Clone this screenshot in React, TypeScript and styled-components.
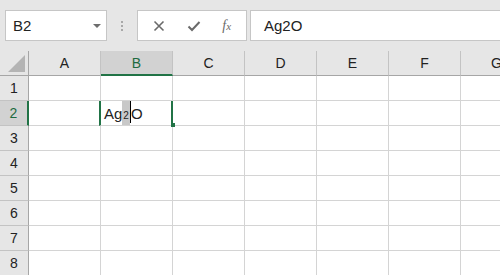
import React, { FC } from 'react';
import styled, { createGlobalStyle } from 'styled-components';

const GlobalStyle = createGlobalStyle`
  body {
    margin: 0;
    background: #ffffff;
    font-family: "Liberation Sans", "Noto Sans CJK JP", sans-serif;
    overflow: hidden;
  }
`;

const green = '#217346';

const Page = styled.div`
  width: 500px;
  height: 275px;
  overflow: hidden;
  background: #fff;
`;

const Toolbar = styled.div`
  display: flex;
  align-items: flex-start;
  height: 51px;
  box-sizing: border-box;
  padding: 10px 0 0 5px;
  background: #e6e6e6;
`;

const NameBox = styled.div`
  display: flex;
  align-items: center;
  justify-content: space-between;
  width: 102px;
  height: 31px;
  box-sizing: border-box;
  border: 1px solid #c6c6c6;
  background: #fff;
  padding: 0 5px 0 7px;
  font-size: 15px;
  color: #222;
`;

const Arrow = styled.span`
  width: 0;
  height: 0;
  border-left: 4px solid transparent;
  border-right: 4px solid transparent;
  border-top: 4px solid #6d6d6d;
`;

const Grip = styled.div`
  width: 30px;
  height: 31px;
  display: flex;
  flex-direction: column;
  align-items: center;
  justify-content: center;
  gap: 2px;
  span {
    width: 2px;
    height: 2px;
    background: #a8a8a8;
  }
`;

const Buttons = styled.div`
  display: flex;
  align-items: center;
  justify-content: space-around;
  width: 110px;
  height: 31px;
  box-sizing: border-box;
  border: 1px solid #c6c6c6;
  background: #fff;
  padding: 0 4px;
  margin-right: 3px;
`;

const Fx = styled.span`
  font-family: "Liberation Serif", serif;
  font-style: italic;
  font-size: 14px;
  color: #6a6a6a;
  span {
    font-size: 11px;
  }
`;

const Formula = styled.div`
  flex: 1;
  height: 31px;
  box-sizing: border-box;
  border: 1px solid #c6c6c6;
  border-right: none;
  background: #fff;
  display: flex;
  align-items: center;
  padding-left: 13px;
  font-size: 15px;
  color: #222;
`;

const Sheet = styled.div`
  display: grid;
  grid-template-columns: 29px repeat(7, 72px);
  grid-auto-rows: 25px;
`;

const Corner = styled.div`
  background: #e6e6e6;
  border-right: 1px solid #a6a6a6;
  border-bottom: 1px solid #a6a6a6;
  position: relative;
  &::after {
    content: '';
    position: absolute;
    right: 3px;
    bottom: 3px;
    border-left: 17px solid transparent;
    border-bottom: 17px solid #b4b4b4;
  }
`;

const ColHead = styled.div<{ active?: boolean }>`
  display: flex;
  align-items: center;
  justify-content: center;
  background: ${({ active }) => (active ? '#d2d2d2' : '#e6e6e6')};
  border-right: 1px solid #c3c3c3;
  border-bottom: ${({ active }) => (active ? `2px solid ${green}` : '1px solid #a6a6a6')};
  font-size: 14px;
  color: ${({ active }) => (active ? '#1e6b40' : '#222')};
`;

const RowHead = styled.div<{ active?: boolean }>`
  display: flex;
  align-items: center;
  justify-content: center;
  background: ${({ active }) => (active ? '#d2d2d2' : '#e6e6e6')};
  border-right: ${({ active }) => (active ? `2px solid ${green}` : '1px solid #a6a6a6')};
  border-bottom: 1px solid #c3c3c3;
  font-size: 14px;
  color: ${({ active }) => (active ? '#1e6b40' : '#222')};
`;

const Cell = styled.div`
  border-right: 1px solid #d4d4d4;
  border-bottom: 1px solid #d4d4d4;
`;

const EditCell = styled.div`
  position: relative;
  border-left: 2px solid ${green};
  border-right: 2px solid ${green};
  border-bottom: 1px solid #d4d4d4;
  margin-left: -2px;
  display: flex;
  align-items: center;
  padding-left: 3px;
  font-size: 15px;
  color: #222;
  &::after {
    content: '';
    position: absolute;
    right: -4px;
    bottom: -2px;
    width: 4px;
    height: 4px;
    background: ${green};
  }
`;

const Sub = styled.span`
  background: #c8c8c8;
  font-size: 10px;
  align-self: stretch;
  display: flex;
  align-items: flex-end;
  padding: 0 1px 4px;
`;

const Caret = styled.span`
  width: 1px;
  align-self: stretch;
  background: #000;
  margin-bottom: 2px;
`;

const columns = ['A', 'B', 'C', 'D', 'E', 'F', 'G'];
const rows = [1, 2, 3, 4, 5, 6, 7, 8];

const App: FC = () => {
  return (
    <Page>
      <GlobalStyle />
      <Toolbar>
        <NameBox>
          B2
          <Arrow />
        </NameBox>
        <Grip>
          <span />
          <span />
          <span />
        </Grip>
        <Buttons>
          <svg width="12" height="12" viewBox="0 0 12 12">
            <path d="M1.5 1.5 L10.5 10.5 M10.5 1.5 L1.5 10.5" stroke="#6a6a6a" strokeWidth="1.6" />
          </svg>
          <svg width="14" height="12" viewBox="0 0 14 12">
            <path d="M1.5 6.5 L5 10 L12.5 2" stroke="#6a6a6a" strokeWidth="2" fill="none" />
          </svg>
          <Fx>
            f<span>x</span>
          </Fx>
        </Buttons>
        <Formula>Ag2O</Formula>
      </Toolbar>
      <Sheet>
        <Corner />
        {columns.map((c) => (
          <ColHead key={c} active={c === 'B'}>
            {c}
          </ColHead>
        ))}
        {rows.map((r) => (
          <React.Fragment key={r}>
            <RowHead active={r === 2}>{r}</RowHead>
            {columns.map((c) =>
              r === 2 && c === 'B' ? (
                <EditCell key={c}>
                  Ag
                  <Sub>2</Sub>
                  <Caret />O
                </EditCell>
              ) : (
                <Cell key={c} />
              )
            )}
          </React.Fragment>
        ))}
      </Sheet>
    </Page>
  );
};

export default App;
